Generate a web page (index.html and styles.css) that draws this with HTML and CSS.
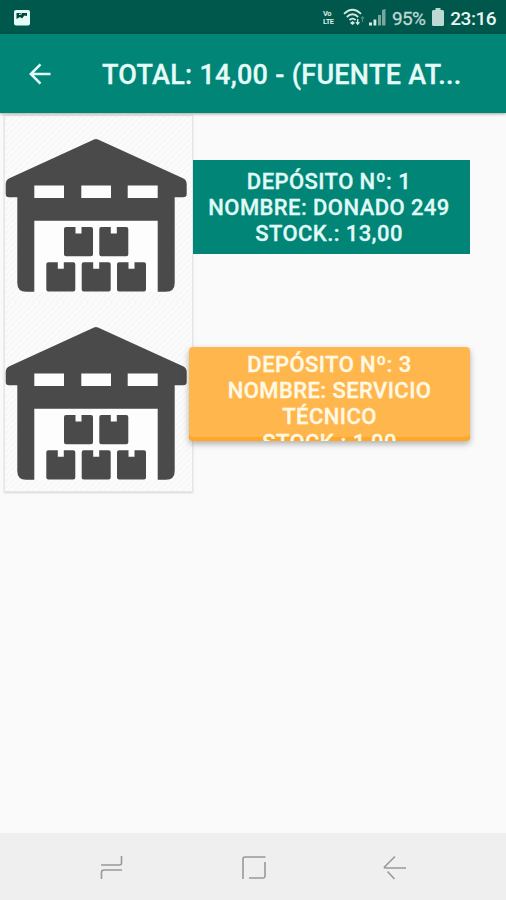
FILE: index.html
```html
<!DOCTYPE html>
<html lang="es">
<head>
<meta charset="utf-8">
<title>Stock por depósito</title>
<link rel="stylesheet" href="styles.css">
</head>
<body>
<svg width="0" height="0" class="defs">
  <defs>
    <pattern id="hatch" width="6" height="6" patternUnits="userSpaceOnUse">
      <path d="M-1 1L1-1M0 6L6 0M5 7L7 5" stroke="#f5f5f5" stroke-width="1.2"/>
    </pattern>
    <path id="box" d="M2 0H11.5V6.5H17.5V0H27Q29 0 29 2V27.200Q29 29.200 27 29.200H2Q0 29.200 0 27.200V2Q0 0 2 0Z"/>
    <symbol id="warehouse" viewBox="0 0 189 188">
      <rect width="189" height="188" fill="url(#hatch)"/>
      <path d="M30 105.700H154V177H30Z" fill="#fdfdfd"/>
      <g fill="#4a4a4a">
        <path d="M90 24.600Q92 23.600 94 24.600L179 63.200Q182.700 65 182.700 69V79Q182.700 82.300 179 82.300H170.700V168Q170.700 176.700 162 176.700H153.700V105.700H30.300V176.700H22Q13.300 176.700 13.300 168V82.300H5Q1.700 82.300 1.700 79V69Q1.700 65 5.400 63.200Z"/>
        <use href="#box" x="60" y="112"/>
        <use href="#box" x="95.300" y="112"/>
        <use href="#box" x="42.300" y="147.300"/>
        <use href="#box" x="77.700" y="147.300"/>
        <use href="#box" x="113" y="147.300"/>
      </g>
      <path d="M30.300 70.500H60V83H30.300ZM77.300 70.500H107V83H77.300ZM123.700 70.500H153.700V83H123.700Z" fill="#fdfdfd"/>
    </symbol>
  </defs>
</svg>
<div class="screen">
  <header class="status">
    <svg class="shot" width="16" height="16" viewBox="0 0 16 16"><rect width="16" height="15.500" rx="2" fill="#e4fbf6"/><path d="M2.500 3H13V6L10.500 5.500 8 8.500 6 7 2.500 9Z" fill="#00483d"/><path d="M5 4.500L8 3.800" stroke="#e4fbf6"/></svg>
    <div class="lte"><span>Vo</span><span>LTE</span></div>
    <svg class="wifi" width="22" height="19" viewBox="0 0 22 19" fill="none" stroke="#d5eae6" stroke-width="1.800"><path d="M1 5.800Q9.500-2.400 18 5.800M3.800 9Q9.500 3.600 15.200 9M6.400 12Q9.500 9.200 12.600 12"/><path d="M9.500 13L12 15 9.500 17 7 15Z" fill="#d5eae6" stroke="none"/><path d="M14.700 11V16M13 14.200L14.700 16.300 16.400 14.200" stroke-width="1.300"/><path d="M19.500 14V9M18 10.500L19.500 8.800 21 10.500" stroke="#4d8c82" stroke-width="1.200"/></svg>
    <svg class="signal" width="17" height="17" viewBox="0 0 17 17"><path d="M0 13.500H3V16.500H0ZM4.500 10.500H7.300V16.500H4.500Z" fill="#d5eae6"/><path d="M9 6H12V16.500H9ZM13 1L16.500 0V16.500H13Z" fill="#76a69e"/></svg>
    <span class="percent">95%</span>
    <svg class="battery" width="12" height="18" viewBox="0 0 12 18"><path d="M3.500 0H8.500V2H10.500Q12 2 12 3.500V16.500Q12 18 10.500 18H1.500Q0 18 0 16.500V3.500Q0 2 1.500 2H3.500Z" fill="#bdd9d4"/></svg>
    <span class="clock">23:16</span>
  </header>
  <div class="toolbar">
    <svg class="back" width="22" height="22" viewBox="0 0 24 24" fill="none" stroke="#e2fbf7" stroke-width="2.800"><path d="M23.500 12H2M12.500 1.500L2 12 12.500 22.500"/></svg>
    <h1>TOTAL: 14,00 - (FUENTE AT...</h1>
  </div>
  <main class="list">
    <div class="pictures">
      <svg width="189" height="188"><use href="#warehouse"/></svg>
      <svg width="189" height="188"><use href="#warehouse"/></svg>
    </div>
    <div class="buttons">
      <div class="deposit green"><span>DEPÓSITO Nº: 1</span><span>NOMBRE: DONADO 249</span><span>STOCK.: 13,00</span></div>
      <div class="deposit orange"><span>DEPÓSITO Nº: 3</span><span>NOMBRE: SERVICIO</span><span>TÉCNICO</span><span>STOCK.: 1,00</span></div>
    </div>
  </main>
  <nav class="nav">
    <svg width="24" height="26" viewBox="0 0 24 26"><path d="M1 10H19.500Q21.500 10 21.500 8V1M22 15H4Q1.500 15 1.500 17.500V24"/></svg>
    <svg width="26" height="26" viewBox="0 0 26 26"><path d="M2 24V4Q2 2 4 2H24.500M24 7V21Q24 23 22 23H8"/></svg>
    <svg width="24" height="26" viewBox="0 0 24 26"><path d="M12 1.500L1.500 12Q1 13 2.500 13H23M4.500 16.500L11.500 24"/></svg>
  </nav>
</div>
</body>
</html>
```
FILE: styles.css
```css
* { box-sizing: border-box; }
body { margin: 0; font-family: Roboto, "Liberation Sans", sans-serif; }
.defs { display: block; }
.screen { width: 506px; height: 900px; display: flex; flex-direction: column; background: #fafafa; overflow: hidden; }
.status { height: 34px; flex: none; background: #00574b; display: flex; align-items: center; padding: 0 10px 0 14px; color: #e9f8f5; white-space: nowrap; }
.status svg { flex: none; }
.shot { margin-top: 1px; }
.lte { width: 14px; margin-left: 293px; flex: none; display: flex; flex-direction: column; font-size: 7.5px; line-height: 8px; font-weight: 700; letter-spacing: -.5px; color: #d5eae6; margin-top: 2px; }
.wifi { margin-left: 6px; margin-top: 1px; }
.signal { margin-left: 4px; margin-top: 1px; }
.percent { width: 34px; margin-left: 6px; font-size: 19px; letter-spacing: -.7px; color: #bdd9d4; margin-top: 3px; -webkit-text-stroke: .3px #bdd9d4; }
.battery { margin-left: 7px; }
.clock { width: 47px; margin-left: 6px; font-size: 19px; font-weight: 500; letter-spacing: -.45px; margin-top: 3px; }
.toolbar { height: 79px; flex: none; background: #008577; display: flex; align-items: center; padding-left: 29px; box-shadow: 0 1px 3px rgba(0,0,0,.35); position: relative; }
.toolbar h1 { margin: 3px 0 0 51px; font-size: 27px; font-weight: 500; line-height: 32px; letter-spacing: .27px; color: #e4fcf8; white-space: nowrap; -webkit-text-stroke: .3px #e4fcf8; }
.list { flex: 1; display: flex; padding: 2px 0 0 4px; }
.pictures { width: 189px; height: 377px; display: flex; flex-direction: column; background: #fbfbfb; outline: 1px solid #e6e6e6; outline-offset: -1px; box-shadow: 0 1px 2px rgba(0,0,0,.15); }
.pictures svg { display: block; flex: none; }
.buttons { display: flex; flex-direction: column; align-items: flex-end; gap: 93px; width: 277px; padding-top: 45px; }
.deposit { height: 94px; flex: none; display: flex; flex-direction: column; align-items: center; font-size: 22px; line-height: 26px; font-weight: 500; letter-spacing: .42px; overflow: hidden; white-space: nowrap; }
.green { width: 277px; background: #008577; color: #e0faf6; padding: 9px 5px 0 0; -webkit-text-stroke: .3px #e0faf6; }
.orange { width: 281px; background: #ffb74d; color: #fff9e6; padding-top: 5px; border-radius: 4px; box-shadow: inset 0 -4px #ffa726, 0 3px 6px rgba(0,0,0,.3); position: relative; -webkit-text-stroke: .3px #fff9e6; }
.deposit span { flex: none; }
.nav { height: 67px; flex: none; background: #efefef; display: flex; justify-content: space-between; align-items: center; padding: 3px 99px 0 100px; }
.nav svg { fill: none; stroke: #999; stroke-width: 1.600; }
```
